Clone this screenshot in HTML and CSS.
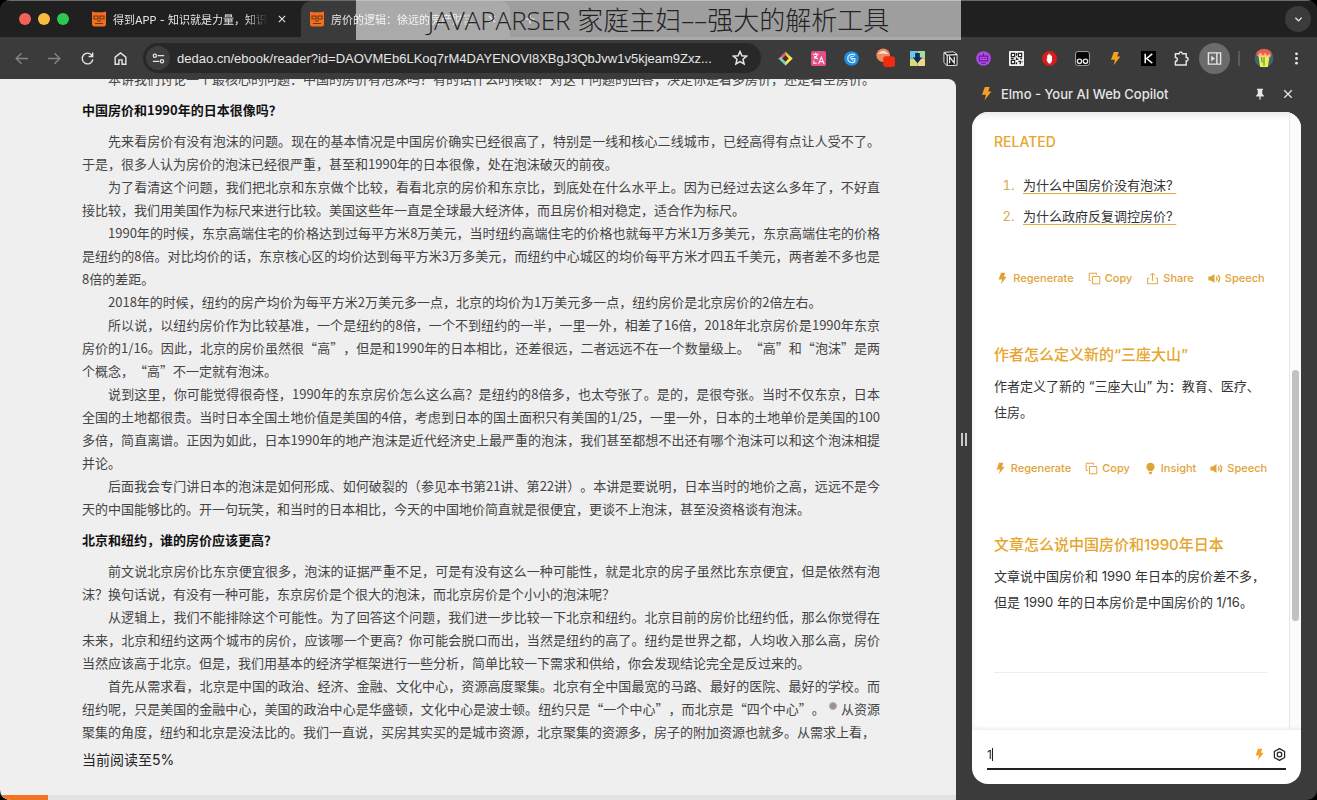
FILE: index.html
```html
<!DOCTYPE html>
<html lang="zh-CN">
<head>
<meta charset="utf-8">
<title>房价的逻辑</title>
<link rel="stylesheet" href="styles.css">
</head>
<body>
<svg class="sprite" aria-hidden="true">
  <symbol id="bolt" viewBox="0 0 16 16"><path d="M6.2 1h5.2L9.8 5.8h3.4L6 15.2l1.4-6H3.2z" fill="currentColor"/></symbol>
  <symbol id="copy" viewBox="0 0 16 16"><path d="M5.5 5.5h9v9h-9zM3.500 10.500h-2v-9h9v2" fill="none" stroke="currentColor" stroke-width="1.2" stroke-linejoin="round"/></symbol>
  <symbol id="share" viewBox="0 0 16 16"><path d="M8 11V1.500M4.800 4.500L8 1.300l3.200 3.200M4 7.500H2v7h12v-7h-2" fill="none" stroke="currentColor" stroke-width="1.200"/></symbol>
  <symbol id="speech" viewBox="0 0 16 16"><path d="M.5 5.500h3L8 2.500v11L3.500 10.500h-3z" fill="currentColor"/><path d="M10.200 5.500q1.800 2.500 0 5M12.500 3.500q3.600 4.500 0 9" fill="none" stroke="currentColor" stroke-width="1.700"/></symbol>
  <symbol id="bulb" viewBox="0 0 16 16"><path d="M8 1a5 5 0 0 1 3 9l-.8 1.500H5.800L5 10a5 5 0 0 1 3-9zM6 12.300h4v1L9 15H7l-1-1.700z" fill="currentColor"/></symbol>
  <symbol id="owl" viewBox="0 0 16 16"><path d="M1 .5l3 .8h8l3-.8v12.500a2.500 2.500 0 0 1-2.500 2.500h-9A2.500 2.500 0 0 1 1 13z" fill="#f07020"/><path d="M3 5h4v3H3zM9 5h4v3H9zM6 10h4M4 12.500h8" fill="none" stroke="#6e3314" stroke-width="1.100"/></symbol>
  <symbol id="close" viewBox="0 0 16 16"><path d="M3 3l10 10M13 3L3 13" fill="none" stroke="currentColor" stroke-width="1.700"/></symbol>
</svg>
<div class="window">
  <header class="tabs">
    <div class="lights"><i class="red"></i><i class="yellow"></i><i class="green"></i></div>
    <div class="tab">
      <svg class="fav"><use href="#owl"/></svg>
      <span class="tab-name">得到APP - 知识就是力量，知识就在得到</span>
      <button class="tab-close" aria-label="关闭标签页"><svg><use href="#close"/></svg></button>
    </div>
    <div class="tab active">
      <svg class="fav"><use href="#owl"/></svg>
      <span class="tab-name">房价的逻辑：徐远的房产财富课</span>
      <button class="tab-close" aria-label="关闭标签页"><svg><use href="#close"/></svg></button>
    </div>
    <button class="new-tab" aria-label="新标签页"><svg viewBox="0 0 16 16"><path d="M8 2v12M2 8h12" class="ln"/></svg></button>
    <button class="tab-menu" aria-label="搜索标签页"><svg viewBox="0 0 16 16"><path d="M3.500 5.500L8 10l4.500-4.500" fill="none" stroke="currentColor" stroke-width="2"/></svg></button>
  </header>

  <nav class="toolbar">
    <button class="tool dim" aria-label="后退"><svg viewBox="0 0 16 16"><path d="M15 8H2.500M8 2.300L2.300 8 8 13.700" class="ln"/></svg></button>
    <button class="tool dim" aria-label="前进"><svg viewBox="0 0 16 16"><path d="M1 8h12.500M8 2.300L13.700 8 8 13.700" class="ln"/></svg></button>
    <button class="tool" aria-label="重新加载"><svg viewBox="0 0 16 16"><path d="M12.800 4.800A5.700 5.700 0 1 0 13.700 9M13.500 1.500v4.300H9.200" class="ln"/></svg></button>
    <button class="tool" aria-label="主页"><svg viewBox="0 0 16 16"><path d="M2.300 6.500L8 2l5.700 4.500v7.700h-4V9.500H6.300v4.700h-4z" class="ln"/></svg></button>
    <div class="omnibox">
      <button class="site" aria-label="网站信息"><svg viewBox="0 0 16 16"><path d="M7 4.500h8M1 11.500h8" class="ln"/><circle cx="3.500" cy="4.500" r="2" class="ln"/><circle cx="12.300" cy="11.500" r="2" class="ln"/></svg></button>
      <input class="url" aria-label="地址" value="dedao.cn/ebook/reader?id=DAOVMEb6LKoq7rM4DAYENOVl8XBgJ3QbJvw1v5kjeam9Zxz...">
      <button class="star" aria-label="收藏"><svg viewBox="0 0 16 16"><path d="M8 1.500l1.900 4.300 4.700.4L11 9.300l1.100 4.600L8 11.500l-4.100 2.400L5 9.300 1.400 6.200l4.700-.4z" class="ln"/></svg></button>
    </div>
    <button class="tool" aria-label="扩展 1"><svg viewBox="0 0 16 16"><path d="M8 .5L.5 8l3 3L8 6z" fill="#f04c8b"/><path d="M8 .5L15.500 8l-3 3L8 6z" fill="#b6e34a"/><path d="M.5 8L8 15.500 12.500 11 8 9.500 4.500 6z" fill="#66d9c0"/><path d="M8 15.500L15.500 8 12 5l-4 5z" fill="#ffe25c"/><path d="M8 4.500L11.500 8 8 11.500 4.500 8z" fill="#552814"/></svg></button>
    <button class="tool" aria-label="翻译"><svg viewBox="0 0 16 16"><rect width="16" height="16" rx="2" fill="#e64d86"/><path d="M2 3.500h6M5 2v1.500M3 8c2-1 3.500-2.500 4-4.500M3.500 5q1 2.500 4 3.500M8 14l3-7.500 3 7.500M9 11.500h4M3 10v3h3" fill="none" stroke="#fff" stroke-width="1.100"/></svg></button>
    <button class="tool" aria-label="扩展 3"><svg viewBox="0 0 16 16"><circle cx="8" cy="8" r="7.800" fill="#238ee0"/><path d="M12 4.500C9 2 4 4 4 8s5 5.500 7.500 3.500V8H8c0 1.500 1 2 2 2M10.500 6C9 5 6.500 6 6.500 8" fill="none" stroke="#d9f2ff" stroke-width="1.200"/></svg></button>
    <button class="tool" aria-label="扩展 4"><svg class="wide" viewBox="0 0 22 22"><circle cx="9" cy="8" r="7.500" fill="#e98b64"/><path d="M3 7q6-8 12 0-6-2-12 0" fill="#ffe0c8"/><rect x="9" y="9" width="13" height="12" rx="3" fill="#f22b10"/></svg></button>
    <button class="tool" aria-label="下载"><svg viewBox="0 0 16 16"><path d="M0 0h8v8H0z" fill="#6bc7e8"/><path d="M8 0h8v8H8z" fill="#a9dca0"/><path d="M0 8h8v8H0z" fill="#d8dc76"/><path d="M8 8h8v8H8z" fill="#f4d48a"/><path d="M5.500 2h5v5H13l-5 6-5-6h2.500z" fill="#102c5c"/></svg></button>
    <button class="tool" aria-label="Notion"><svg viewBox="0 0 16 16"><path d="M1 1.500L11 .8l4 2.700v11.700l-11 .5-3-3.700z" fill="#202020" stroke="#eee"/><path d="M1.500 2L4.500 4.500v10.800M4.500 4.500L15 3.800M7 13V6.500l5 6.200V6" fill="none" stroke="#eee" stroke-width="1.300"/></svg></button>
    <button class="tool" aria-label="扩展 7"><svg viewBox="0 0 16 16"><circle cx="8" cy="8" r="7.800" fill="#b04be6"/><path d="M3.500 5.500h9v5h-9zM5.500 13h5M5.500 8h1.500M9 8h1.500M8 2.500v3" fill="none" stroke="#6a1a9c" stroke-width="1.200"/></svg></button>
    <button class="tool" aria-label="二维码"><svg viewBox="0 0 16 16"><rect width="16" height="16" rx="1" fill="#f6f6f6"/><path d="M2.500 2.500h3.500v3.500H2.500zM10 2.500h3.500v3.500H10zM2.500 10h3.500v3.500H2.500z" fill="none" stroke="#222" stroke-width="1.300"/><path d="M8 2v3M8 7v2h2M2 8h3M12 8h2M10 11h2v3M14 11v1M8 12v2" fill="none" stroke="#222" stroke-width="1.400"/></svg></button>
    <button class="tool" aria-label="广告拦截"><svg viewBox="0 0 16 16"><path d="M4.800.3h6.400l4.500 4.500v6.400l-4.500 4.500H4.800L.3 11.200V4.800z" fill="#dc1c1c"/><path d="M4.500 8l1 1V4.500h1.300V3h1.300v1h1.300v1h1.300v5.500Q10 13.500 8 13.500q-2 0-3.500-5.500" fill="#fff"/></svg></button>
    <button class="tool" aria-label="脚本管理"><svg viewBox="0 0 16 16"><rect x=".6" y=".6" width="14.800" height="14.800" rx="2.500" fill="#050505" stroke="#aaa"/><circle cx="4.800" cy="11" r="2.300" class="ln"/><circle cx="11.200" cy="11" r="2.300" class="ln"/></svg></button>
    <button class="tool amber" aria-label="Elmo"><svg><use href="#bolt"/></svg></button>
    <button class="tool" aria-label="扩展 K"><svg viewBox="0 0 16 16"><rect width="16" height="16" fill="#000"/><path d="M4.500 3v10M12 3L6 8l6 5M4.500 8H7" fill="none" stroke="#fff" stroke-width="1.600"/></svg></button>
    <button class="tool" aria-label="扩展程序"><svg viewBox="0 0 16 16"><path d="M1.500 3H5.500Q5.500 1 7.200 1T9 3h4v4q2 0 2 1.800T13 10.500V15H1.500v-4q2 0 2-2t-2-2z" class="ln"/></svg></button>
    <button class="tool panel-on" aria-label="侧边栏"><svg viewBox="0 0 16 16"><path d="M1.500 2h13v12h-13zM10.500 2v12" class="ln"/><path d="M4.500 5v6l4-3z" fill="currentColor"/></svg></button>
    <span class="sep"></span>
    <button class="tool" aria-label="账户"><svg class="wide" viewBox="0 0 18 18"><circle cx="9" cy="9" r="8.500" fill="#3c6870"/><path d="M2 7q0-6 7-6t7 6z" fill="#ee5b48"/><path d="M4 7h10l-1.500 10h-7z" fill="#f3ed55"/><path d="M3 7l3-3 2 3 2-3 2 3 2-2 1 3z" fill="#ffb0a0"/><path d="M9 8v8M6.500 8l1 5" stroke="#62a83b" stroke-width="1.200"/></svg></button>
    <button class="tool" aria-label="更多"><svg viewBox="0 0 16 16"><circle cx="8" cy="3" r="1.500" fill="currentColor"/><circle cx="8" cy="8" r="1.500" fill="currentColor"/><circle cx="8" cy="13" r="1.500" fill="currentColor"/></svg></button>
  </nav>

  <div class="body">
    <main class="reader">
      <article class="book">
        <p>本讲我们讨论一个最核心的问题：中国的房价有泡沫吗？有的话什么时候破？对这个问题的回答，决定你是看多房价，还是看空房价。</p>
        <h2>中国房价和1990年的日本很像吗？</h2>
        <p>先来看房价有没有泡沫的问题。现在的基本情况是中国房价确实已经很高了，特别是一线和核心二线城市，已经高得有点让人受不了。于是，很多人认为房价的泡沫已经很严重，甚至和1990年的日本很像，处在泡沫破灭的前夜。</p>
        <p>为了看清这个问题，我们把北京和东京做个比较，看看北京的房价和东京比，到底处在什么水平上。因为已经过去这么多年了，不好直接比较，我们用美国作为标尺来进行比较。美国这些年一直是全球最大经济体，而且房价相对稳定，适合作为标尺。</p>
        <p>1990年的时候，东京高端住宅的价格达到过每平方米8万美元，当时纽约高端住宅的价格也就每平方米1万多美元，东京高端住宅的价格是纽约的8倍。对比均价的话，东京核心区的均价达到每平方米3万多美元，而纽约中心城区的均价每平方米才四五千美元，两者差不多也是8倍的差距。</p>
        <p>2018年的时候，纽约的房产均价为每平方米2万美元多一点，北京的均价为1万美元多一点，纽约房价是北京房价的2倍左右。</p>
        <p>所以说，以纽约房价作为比较基准，一个是纽约的8倍，一个不到纽约的一半，一里一外，相差了16倍，2018年北京房价是1990年东京房价的1/16。因此，北京的房价虽然很“高”，但是和1990年的日本相比，还差很远，二者远远不在一个数量级上。“高”和“泡沫”是两个概念，“高”不一定就有泡沫。</p>
        <p>说到这里，你可能觉得很奇怪，1990年的东京房价怎么这么高？是纽约的8倍多，也太夸张了。是的，是很夸张。当时不仅东京，日本全国的土地都很贵。当时日本全国土地价值是美国的4倍，考虑到日本的国土面积只有美国的1/25，一里一外，日本的土地单价是美国的100多倍，简直离谱。正因为如此，日本1990年的地产泡沫是近代经济史上最严重的泡沫，我们甚至都想不出还有哪个泡沫可以和这个泡沫相提并论。</p>
        <p>后面我会专门讲日本的泡沫是如何形成、如何破裂的（参见本书第21讲、第22讲）。本讲是要说明，日本当时的地价之高，远远不是今天的中国能够比的。开一句玩笑，和当时的日本相比，今天的中国地价简直就是很便宜，更谈不上泡沫，甚至没资格谈有泡沫。</p>
        <h2>北京和纽约，谁的房价应该更高？</h2>
        <p>前文说北京房价比东京便宜很多，泡沫的证据严重不足，可是有没有这么一种可能性，就是北京的房子虽然比东京便宜，但是依然有泡沫？换句话说，有没有一种可能，东京房价是个很大的泡沫，而北京房价是个小小的泡沫呢？</p>
        <p>从逻辑上，我们不能排除这个可能性。为了回答这个问题，我们进一步比较一下北京和纽约。北京目前的房价比纽约低，那么你觉得在未来，北京和纽约这两个城市的房价，应该哪一个更高？你可能会脱口而出，当然是纽约的高了。纽约是世界之都，人均收入那么高，房价当然应该高于北京。但是，我们用基本的经济学框架进行一些分析，简单比较一下需求和供给，你会发现结论完全是反过来的。</p>
        <p>首先从需求看，北京是中国的政治、经济、金融、文化中心，资源高度聚集。北京有全中国最宽的马路、最好的医院、最好的学校。而纽约呢，只是美国的金融中心，美国的政治中心是华盛顿，文化中心是波士顿。纽约只是“一个中心”，而北京是“四个中心”。<span class="note"></span>从资源聚集的角度，纽约和北京是没法比的。我们一直说，买房其实买的是城市资源，北京聚集的资源多，房子的附加资源也就多。从需求上看，</p>
      </article>
      <p class="read-at">当前阅读至5%</p>
      <div class="progress"><div class="progress-fill" style="width:5%"></div></div>
    </main>

    <div class="splitter"><i></i><i></i></div>

    <aside class="side">
      <div class="side-head">
        <svg class="side-logo"><use href="#bolt"/></svg>
        <h1>Elmo - Your AI Web Copilot</h1>
        <button aria-label="固定"><svg viewBox="0 0 16 16"><path d="M4 1h8v1.500h-1v5l2 2.500v1.200H8.800V15L8 16l-.8-1v-3.800H3V10l2-2.500v-5H4z" fill="currentColor"/></svg></button>
        <button aria-label="关闭侧边栏"><svg><use href="#close"/></svg></button>
      </div>
      <div class="card">
        <div class="pane">
          <div class="chat">
            <section>
              <h2>RELATED</h2>
              <ol class="related">
                <li><a href="#">为什么中国房价没有泡沫?&nbsp;</a></li>
                <li><a href="#">为什么政府反复调控房价?&nbsp;</a></li>
              </ol>
              <div class="actions">
                <button><svg><use href="#bolt"/></svg>Regenerate</button>
                <button><svg><use href="#copy"/></svg>Copy</button>
                <button><svg><use href="#share"/></svg>Share</button>
                <button><svg><use href="#speech"/></svg>Speech</button>
              </div>
            </section>
            <section>
              <h2>作者怎么定义新的“三座大山”</h2>
              <p>作者定义了新的 “三座大山” 为：教育、医疗、住房。</p>
              <div class="actions">
                <button><svg><use href="#bolt"/></svg>Regenerate</button>
                <button><svg><use href="#copy"/></svg>Copy</button>
                <button><svg><use href="#bulb"/></svg>Insight</button>
                <button><svg><use href="#speech"/></svg>Speech</button>
              </div>
            </section>
            <section>
              <h2>文章怎么说中国房价和1990年日本</h2>
              <p>文章说中国房价和 1990 年日本的房价差不多，但是 1990 年的日本房价是中国房价的 1/16。</p>
            </section>
            <hr>
          </div>
          <div class="track"><div class="thumb"></div></div>
        </div>
        <form class="ask">
          <div class="field">
            <div class="entry"><input aria-label="提问" value="1"><i class="caret"></i></div>
            <button type="button" class="amber" aria-label="快速操作"><svg><use href="#bolt"/></svg></button>
            <button type="button" aria-label="设置"><svg viewBox="0 0 16 16"><path d="M8 .8l6.300 3.600v7.200L8 15.200l-6.300-3.600V4.400z" fill="none" stroke="currentColor" stroke-width="1.500" stroke-linejoin="round"/><circle cx="8" cy="8" r="2.800" fill="none" stroke="currentColor" stroke-width="1.500"/></svg></button>
          </div>
        </form>
      </div>
    </aside>
  </div>
</div>
<div class="banner">JAVAPARSER 家庭主妇––强大的解析工具</div>
</body>
</html>
```
FILE: styles.css
```css
* { box-sizing: border-box; }
body { margin: 0; background: #000; font-family: Inter, "Noto Sans CJK SC", sans-serif; }
button, input { font: inherit; color: inherit; background: none; border: 0; padding: 0; margin: 0; }
button { display: flex; align-items: center; justify-content: center; }
h1, h2, p, ol { margin: 0; }
i { display: block; }
.sprite { position: absolute; width: 0; height: 0; }
.ln { fill: none; stroke: currentColor; stroke-width: 1.5; }

.window { height: 100vh; display: flex; flex-direction: column; overflow: hidden; border-radius: 10px; background: #3b3b3b; color: #e6e6e6; }

.tabs { flex: none; height: 37px; display: flex; align-items: center; background: #202020; border-top: 1px solid #6a6d6c; }
.lights { display: flex; gap: 7px; padding: 0 22px 0 19px; }
.lights i { width: 12px; height: 12px; border-radius: 50%; }
.red { background: #f4605a; }
.yellow { background: #f6be3e; }
.green { background: #2dc84d; }
.tab { width: 209px; height: 36px; display: flex; align-items: center; gap: 6px; font-size: 11px; padding: 0 10px 0 0; }
.tab.active { background: #3b3b3b; border-radius: 10px 10px 0 0; padding-left: 8px; margin-left: 1px; }
.fav { width: 16px; height: 16px; flex: none; }
.tab-name { flex: 1; overflow: hidden; white-space: nowrap; -webkit-mask-image: linear-gradient(90deg, #000 85%, transparent); mask-image: linear-gradient(90deg, #000 85%, transparent); }
.tab-close { width: 16px; height: 16px; }
.tab-close svg { width: 10px; height: 10px; }
.new-tab { width: 40px; }
.new-tab svg { width: 12px; height: 12px; }
.tab-menu { width: 26px; height: 26px; margin: 0 6px 0 auto; border-radius: 50%; background: #3b3b3b; }
.tab-menu svg { width: 11px; height: 11px; }

.toolbar { flex: none; height: 42px; display: flex; align-items: center; padding: 0 4px 0 5px; }
.tool { flex: none; width: 33px; height: 32px; }
.tool svg { width: 15px; height: 15px; }
.tool .wide { width: 20px; height: 20px; }
.dim { color: #858585; }
.amber { color: #f5a023; }
.tool.panel-on { width: 31px; height: 31px; margin: 0 1px; border-radius: 50%; background: #6b6b6b; }
.sep { width: 2px; height: 15px; margin: 0 7px; background: #5b5b5b; }
.omnibox { flex: 1; min-width: 0; height: 30px; display: flex; align-items: center; gap: 7px; margin: 0 8px 0 6px; padding: 0 13px 0 3px; border-radius: 15px; background: #282828; }
.site { flex: none; width: 24px; height: 24px; border-radius: 50%; background: #3d3d3d; }
.site svg { width: 13px; height: 13px; }
.url { flex: 1; min-width: 0; font-family: "Liberation Sans", sans-serif; font-size: 13px; text-overflow: ellipsis; }
.star { flex: none; }
.star svg { width: 16px; height: 16px; }

.body { flex: 1; min-height: 0; display: flex; padding-right: 16px; }
.reader { flex: 1; min-width: 0; display: flex; flex-direction: column; overflow: hidden; border-radius: 0 8px 0 0; background: #efefef; color: #444; font-family: "Noto Sans CJK SC", sans-serif; text-spacing-trim: space-all; }
.book { margin: -12px 76px 0 82px; font-size: 13px; line-height: 23px; text-align: justify; }
.book p { text-indent: 2em; }
.book h2 { margin: 8px 0; font-size: 13px; font-weight: 700; color: #111; }
.note { display: inline-block; width: 8px; height: 8px; margin: 0 4px 4px; border-radius: 50%; background: #9b9191; border: 1px solid #b4acac; }
.read-at { margin: 5px 82px 0; font-family: Inter, "Noto Sans CJK SC", sans-serif; font-size: 14px; line-height: 24px; color: #222; }
.progress { margin-top: auto; height: 5px; background: #e2e2e2; }
.progress-fill { height: 100%; background: #f27321; }

.splitter { flex: none; width: 16px; display: flex; align-items: center; justify-content: center; gap: 2px; }
.splitter i { width: 2px; height: 13px; background: #c9c9c9; }
.side { flex: none; width: 329px; display: flex; flex-direction: column; padding-bottom: 16px; }
.side-head { flex: none; height: 33px; display: flex; align-items: center; gap: 16px; padding: 0 7px 4px; }
.side-head svg { width: 12px; height: 12px; display: block; }
.side-head .side-logo { width: 15px; height: 15px; color: #f5a023; margin-right: -9px; }
.side-head h1 { flex: 1; font-size: 13px; font-weight: 500; line-height: 20px; }

.card { flex: 1; min-height: 0; display: flex; flex-direction: column; overflow: hidden; border-radius: 16px; background: #fff; color: #333; }
.pane { flex: 1; min-height: 0; display: flex; overflow: hidden; box-shadow: inset 0 4px 6px #ececec; }
.chat { flex: 1; min-width: 0; padding: 20px 22px 0; display: flex; flex-direction: column; gap: 57px; }
.chat h2 { font-size: 15px; font-weight: 500; line-height: 20px; color: #e6a52c; white-space: nowrap; }
.chat section:first-child h2 { font-size: 14px; }
.chat p { margin-top: 8px; font-size: 13px; line-height: 26px; }
.chat hr { width: 100%; margin: 0; border: 0; border-top: 1px solid #ececec; }
.related { margin-top: 20px; padding-left: 24px; display: flex; flex-direction: column; gap: 5px; font-size: 13px; line-height: 26px; }
.related li { padding-left: 5px; }
.related li::marker { color: #d9a94f; }
.related a { color: #333; text-decoration: underline; text-decoration-color: #e2ac3e; text-underline-offset: 3px; }
.actions { margin-top: 33px; display: flex; justify-content: center; gap: 14px; }
.related + .actions { margin-top: 39px; }
.actions button { gap: 4px; font-size: 11px; font-weight: 500; line-height: 20px; color: #e0a338; }
.actions svg { width: 13px; height: 13px; }
.track { flex: none; width: 12px; border-left: 1px solid #e6e6e6; background: #fbfbfb; display: flex; flex-direction: column; padding: 0 2px; }
.thumb { height: 251px; margin-top: 258px; border-radius: 4px; background: #c1c1c1; }
.ask { flex: none; padding: 11px 15px 14px; border-top: 1px solid #eee; box-shadow: 0 -1px 3px #eee; }
.field { display: flex; align-items: center; gap: 7px; height: 29px; border-bottom: 2px solid #222; font-size: 12px; color: #222; }
.entry { position: relative; flex: 1; display: flex; }
.entry input { width: 100%; outline: 0; }
.caret { position: absolute; left: 5px; top: 1px; width: 1px; height: 13px; background: #222; }
.field svg { width: 13px; height: 13px; }

.banner { position: absolute; top: 0; left: 27%; right: 27%; height: 40px; background: rgba(255, 255, 255, .57); color: #222; font-family: "Open Sans", "Noto Sans CJK SC", sans-serif; font-weight: 300; font-size: 26px; line-height: 40px; text-align: center; white-space: nowrap; }
```
